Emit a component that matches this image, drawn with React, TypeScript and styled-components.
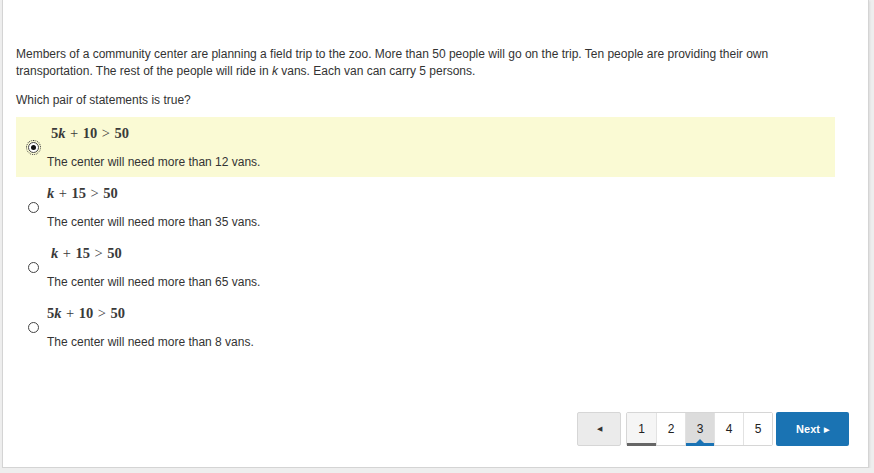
import React from 'react';
import styled, { createGlobalStyle } from 'styled-components';

const Global = createGlobalStyle`
  html, body {
    margin: 0;
    padding: 0;
    background: #eeeeee;
  }
  body {
    font-family: "Liberation Sans", Arial, sans-serif;
    color: #333;
  }
`;

const Panel = styled.div`
  box-sizing: border-box;
  width: 867px;
  height: 468px;
  margin-left: 2px;
  background: #fff;
  border: 1px solid #d4d4d4;
  border-top: none;
  box-shadow: 1px 1px 2px rgba(0, 0, 0, 0.08);
  padding: 46px 19px 21px 13px;
  display: flex;
  flex-direction: column;
`;

const Para = styled.p<{ $gap?: number }>`
  margin: 0 0 ${(p) => p.$gap ?? 12}px;
  padding-right: 10px;
  font-size: 12px;
  line-height: 17px;
`;

const Options = styled.div`
  width: 819px;
  display: flex;
  flex-direction: column;
`;

const Option = styled.div<{ $selected?: boolean }>`
  height: 60px;
  box-sizing: border-box;
  display: flex;
  align-items: center;
  padding-left: 12px;
  gap: 8px;
  background: ${(p) => (p.$selected ? '#fafad4' : 'transparent')};
`;

const Radio = styled.span<{ $checked?: boolean }>`
  position: relative;
  width: 11px;
  height: 11px;
  box-sizing: border-box;
  border-radius: 50%;
  border: 1px solid #444;
  background: #fff;
  flex-shrink: 0;
  outline: ${(p) => (p.$checked ? '1px dotted #333' : 'none')};
  outline-offset: 1px;
  &::after {
    content: '';
    display: ${(p) => (p.$checked ? 'block' : 'none')};
    position: absolute;
    left: 2px;
    top: 2px;
    width: 5px;
    height: 5px;
    border-radius: 50%;
    background: #111;
  }
`;

const OptionBody = styled.div`
  display: flex;
  flex-direction: column;
  padding-top: 4px;
`;

const Math = styled.div<{ $indent?: number }>`
  font-family: "Liberation Serif", "Times New Roman", serif;
  font-size: 14.5px;
  font-weight: bold;
  color: #3a3a3a;
  height: 20px;
  line-height: 20px;
  margin-left: ${(p) => p.$indent ?? 0}px;
  margin-top: -6px;
  margin-bottom: 12px;
`;

const Var = styled.i`
  font-style: italic;
`;

const Op = styled.span`
  font-weight: normal;
  margin: 0 4.5px;
`;

const Desc = styled.div`
  font-size: 12px;
  line-height: 14px;
`;

const Footer = styled.div`
  margin-top: auto;
  display: flex;
  justify-content: flex-end;
  align-items: stretch;
  height: 34px;
`;

const Prev = styled.button`
  width: 44px;
  height: 34px;
  border: 1px solid #d6d6d6;
  border-radius: 2px;
  background: #ebebeb;
  color: #333;
  font-size: 7px;
  margin-right: 5px;
  padding: 0;
`;

const Pages = styled.div`
  display: flex;
  border: 1px solid #d6d6d6;
  border-radius: 2px;
  margin-right: 3px;
`;

const Page = styled.div<{ $state?: 'visited' | 'current' }>`
  position: relative;
  width: 29px;
  box-sizing: border-box;
  display: flex;
  align-items: center;
  justify-content: center;
  font-size: 12px;
  color: #222;
  border-left: 1px solid #e2e2e2;
  background: ${(p) =>
    p.$state === 'current' ? '#dcdcdc' : p.$state === 'visited' ? '#f5f5f5' : '#fff'};
  &:first-child {
    border-left: none;
  }
  &::after {
    content: '';
    display: ${(p) => (p.$state ? 'block' : 'none')};
    position: absolute;
    left: 0;
    right: 0;
    bottom: -1px;
    height: 3px;
    background: ${(p) => (p.$state === 'current' ? '#1a73b5' : '#666')};
  }
  &::before {
    content: '';
    display: ${(p) => (p.$state === 'current' ? 'block' : 'none')};
    position: absolute;
    left: 50%;
    bottom: 2px;
    margin-left: -4px;
    border-left: 4px solid transparent;
    border-right: 4px solid transparent;
    border-bottom: 4px solid #1a73b5;
  }
`;

const Next = styled.button`
  width: 73px;
  height: 34px;
  border: none;
  border-radius: 2px;
  background: #1a73b3;
  color: #fff;
  font-family: "Liberation Sans", Arial, sans-serif;
  font-weight: bold;
  font-size: 11px;
  padding: 0;
  span {
    font-size: 7px;
    margin-left: 4px;
    vertical-align: 1px;
  }
`;

type Item = {
  coef: string;
  constant: string;
  desc: string;
  indent: number;
};

const items: Item[] = [
  { coef: '5', constant: '10', desc: 'The center will need more than 12 vans.', indent: 4 },
  { coef: '', constant: '15', desc: 'The center will need more than 35 vans.', indent: 0 },
  { coef: '', constant: '15', desc: 'The center will need more than 65 vans.', indent: 4 },
  { coef: '5', constant: '10', desc: 'The center will need more than 8 vans.', indent: 0 },
];

export default function App() {
  return (
    <>
      <Global />
      <Panel>
        <Para>
          Members of a community center are planning a field trip to the zoo. More than 50 people will go on
          the trip. Ten people are providing their own transportation. The rest of the people will ride in{' '}
          <i>k</i> vans. Each van can carry 5 persons.
        </Para>
        <Para $gap={8}>Which pair of statements is true?</Para>
        <Options>
          {items.map((it, i) => (
            <Option key={i} $selected={i === 0}>
              <Radio $checked={i === 0} />
              <OptionBody>
                <Math $indent={it.indent}>
                  {it.coef}
                  <Var>k</Var>
                  <Op>+</Op>
                  {it.constant}
                  <Op>&gt;</Op>
                  50
                </Math>
                <Desc>{it.desc}</Desc>
              </OptionBody>
            </Option>
          ))}
        </Options>
        <Footer>
          <Prev>◀</Prev>
          <Pages>
            <Page $state="visited">1</Page>
            <Page>2</Page>
            <Page $state="current">3</Page>
            <Page>4</Page>
            <Page>5</Page>
          </Pages>
          <Next>
            Next<span>▶</span>
          </Next>
        </Footer>
      </Panel>
    </>
  );
}
